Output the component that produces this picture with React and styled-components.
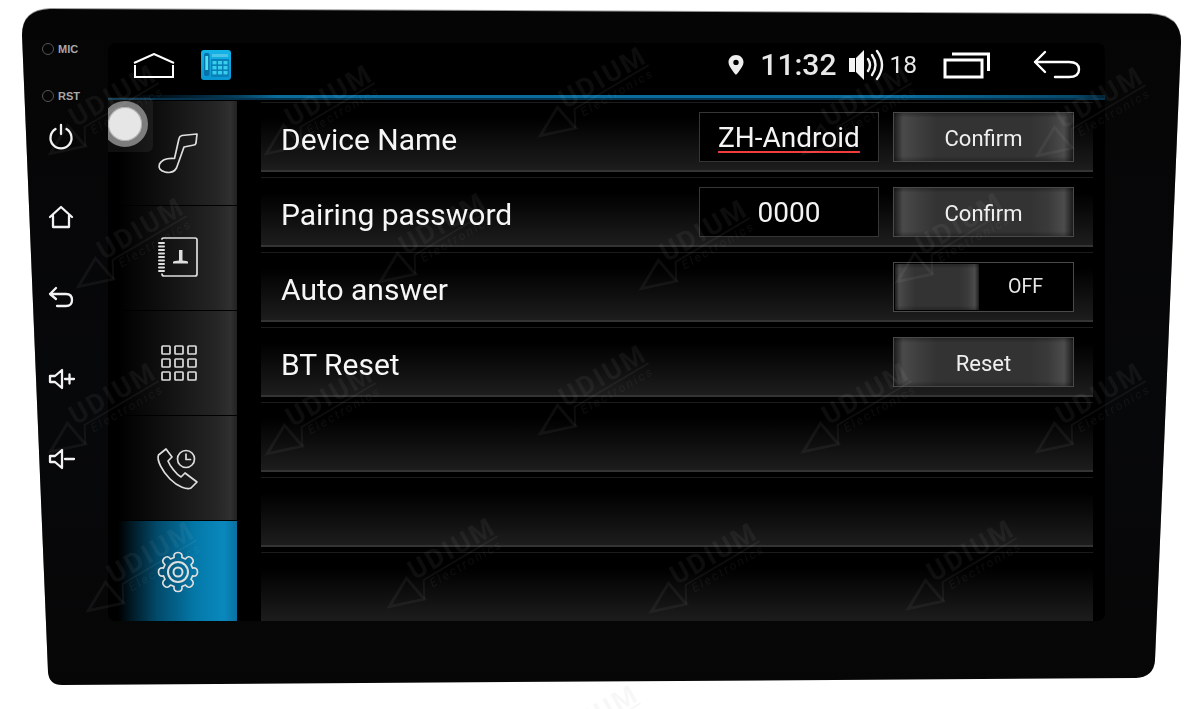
import React from 'react'
import styled, { createGlobalStyle } from 'styled-components'

const Global = createGlobalStyle`
html, body {
  margin: 0;
  padding: 0;
  background: #fff;
}
* {
  box-sizing: border-box;
}
`

const Page = styled.div`
position: relative;
width: 1200px;
height: 709px;
overflow: hidden;
background: #fff;
font-family: Roboto, "Liberation Sans", sans-serif;
`

const BezelEdge = styled.div`
filter: drop-shadow(0 -1px 0.5px #9a9a9a);
`

const Bezel = styled.div`
display: flex;
align-items: flex-start;
width: 1200px;
height: 709px;
background: linear-gradient(180deg, #050505 0%, #07080a 60%, #060606 100%);
clip-path: path('M50 9 L1150 14 Q1181 15 1181 42 L1155 660 Q1154 677 1136 678 L62 685 Q49 685 48 672 L22 35 Q22 10 50 9 Z');
`

const Rail = styled.div`
display: flex;
flex-direction: column;
align-items: flex-start;
flex: none;
width: 108px;
padding: 41px 0 0 42px;
`

const Led = styled.div`
display: flex;
align-items: center;
gap: 4px;
height: 16px;
margin-bottom: 31px;
color: #a8a8a8;
font: 700 11px "Liberation Sans", sans-serif;

&::before {
  content: '';
  width: 10px;
  height: 10px;
  border: 1px solid #555;
  border-radius: 50%;
}
`

const RailButtons = styled.div`
display: flex;
flex-direction: column;
gap: 56px;
margin-top: -10px;
`

const RailIcon = styled.svg`
display: block;
width: 38px;
height: 24px;
overflow: visible;
fill: none;
stroke: #f2f2f2;
stroke-width: 2.3;
stroke-linecap: round;
stroke-linejoin: round;
`

const Screen = styled.div`
position: relative;
flex: none;
width: 997px;
height: 578px;
margin-top: 43px;
background: #000;
border-radius: 8px;
overflow: hidden;
`

const StatusBar = styled.div`
display: flex;
align-items: center;
height: 52px;
padding: 0 24px 9px 25px;
`

const HomeGlyph = styled.svg`
width: 42px;
height: 26px;
margin-top: 2px;
fill: none;
stroke: #fff;
stroke-width: 2;
`

const PhoneApp = styled.svg`
width: 30px;
height: 30px;
margin: 0 0 0 26px;
`

const StatusRight = styled.div`
display: flex;
align-items: center;
margin-left: auto;
color: #e8e8e8;
`

const Pin = styled.svg`
width: 16px;
height: 20px;
fill: #eee;
margin: 0 16px 0 0;
`

const Clock = styled.span`
font-size: 30px;
font-weight: 500;
margin-right: 13px;
`

const Speaker = styled.svg`
width: 36px;
height: 32px;
`

const Volume = styled.span`
font-size: 24.5px;
margin: 0 26px 0 4px;
color: #e8e8e8;
`

const Recents = styled.svg`
width: 48px;
height: 28px;
fill: none;
stroke: #fff;
stroke-width: 3;
margin-right: 42px;
`

const BackGlyph = styled.svg`
width: 48px;
height: 30px;
fill: none;
stroke: #fff;
stroke-width: 2.4;
stroke-linecap: round;
stroke-linejoin: round;
`

const GlowLine = styled.div`
height: 5px;
background: linear-gradient(90deg, transparent 2%, #04263a 9%, #06405e 13%, #0b6c9c 17%, #0b6c9c 80%, #07496b 97%, #02202f 100%);
border-bottom: 2px solid #06334d;
`

const Body = styled.div`
display: flex;
align-items: flex-start;
padding-top: 2px;
`

const Sidebar = styled.div`
display: flex;
flex-direction: column;
gap: 1px;
flex: none;
width: 129px;
margin-top: -1px;
`

const Tab = styled.div`
display: flex;
align-items: center;
justify-content: center;
height: ${props => props.$last ? '101px' : '104px'};
padding-left: 11px;
background: ${props => props.$active
    ? 'linear-gradient(90deg, #000 8%, #024a6a 38%, #0479a9 68%, #0a88bd 90%, #0a70a0 100%)'
    : 'linear-gradient(90deg, #000 8%, #111 45%, #262626 85%, #303030 95%, #222 100%)'};
`

const TabIcon = styled.svg`
width: 42px;
height: 42px;
overflow: visible;
fill: none;
stroke: #dedede;
stroke-width: 1.7;
stroke-linecap: round;
stroke-linejoin: round;
`

const List = styled.div`
display: flex;
flex-direction: column;
gap: 5px;
flex: none;
width: 832px;
height: 519px;
margin-left: 24px;
`

const Row = styled.div`
display: flex;
align-items: center;
gap: 14px;
flex: ${props => props.$last ? '1' : 'none'};
height: 70px;
padding: 0 19px 0 20px;
background: linear-gradient(180deg, #000 0%, #000 22%, #1d1d1d 100%);
border-top: 1px solid #1c1c1c;
border-bottom: ${props => props.$last ? '0' : '2px solid #343434'};
`

const Label = styled.div`
flex: 1;
margin-top: 6px;
color: #f6f6f6;
font-size: 30px;
`

const Field = styled.div`
display: flex;
align-items: center;
justify-content: center;
width: 180px;
height: 50px;
padding-top: 2px;
background: #000;
border: 1px solid #363636;
color: #f4f4f4;
font-size: 28px;
`

const Misspelt = styled.span`
text-decoration: underline 2px #f03c3c;
text-decoration-skip-ink: none;
text-underline-offset: 4px;
`

const buttonFace = `
background:
  linear-gradient(180deg, rgba(0,0,0,0.28) 0%, rgba(0,0,0,0) 10%, rgba(0,0,0,0) 90%, rgba(0,0,0,0.25) 100%),
  linear-gradient(90deg, #1c1c1c 0%, #4a4a4a 5%, #3e3e3e 14%, #333 24%, #333 76%, #3a3a3a 86%, #4c4c4c 95%, #1c1c1c 100%);
`

const Button = styled.div`
display: flex;
align-items: center;
justify-content: center;
flex: none;
width: 181px;
height: 50px;
padding-top: 3px;
border: 1px solid #4a4a4a;
color: #f0f0f0;
font-size: 22px;
${buttonFace}
`

const Toggle = styled.div`
display: flex;
align-items: center;
flex: none;
width: 181px;
height: 50px;
padding: 1px;
background: #000;
border: 1px solid #4a4a4a;
color: #e8e8e8;
font-size: 19.5px;
`

const Thumb = styled.div`
flex: none;
width: 84px;
height: 100%;
${buttonFace}
`

const ToggleText = styled.span`
flex: 1;
text-align: center;
`

const BallShade = styled.div`
position: absolute;
left: 0;
top: 54px;
width: 45px;
height: 55px;
background: rgba(255, 255, 255, 0.06);
border-radius: 0 6px 6px 0;
`

const Ball = styled.div`
position: absolute;
left: -6px;
top: 58px;
width: 46px;
height: 46px;
border-radius: 50%;
background: #e6e6e6;
border: 6px solid #7d7d7d;
box-shadow: inset 0 0 0 1px #b4b4b4;
`

const Marks = styled.div`
position: absolute;
inset: 0;
pointer-events: none;
`

const MarkSvg = styled.svg`
position: absolute;
left: ${props => props.$x - 10}px;
top: ${props => props.$y - 50}px;
width: 150px;
height: 70px;
overflow: visible;
transform-origin: 10px 50px;
transform: rotate(-30deg);
color: ${props => props.$light ? 'rgba(0,0,0,0.03)' : 'rgba(255,255,255,0.05)'};
`

const Watermark = ({ x, y, light }) => (
  <MarkSvg $x={x} $y={y} $light={light} viewBox="0 0 150 70">
    <g fill="none" stroke="currentColor" strokeWidth="3" strokeLinejoin="miter">
      <path d="M11 49 L40 33 L45 60 Z" />
      <path d="M45 60 L54 43 L140 42" strokeWidth="2" />
    </g>
    <text x="46" y="39" textLength="94" fontFamily="Roboto, sans-serif" fontWeight="700" fontSize="27" fill="currentColor">UDIUM</text>
    <text x="58" y="54" textLength="80" fontFamily="Roboto, sans-serif" fontStyle="italic" fontSize="12" fill="currentColor">Electronics</text>
  </MarkSvg>
)

const markSpots = [
  [50, 155], [266, 155], [540, 137], [803, 155], [1037, 157],
  [78, 288], [380, 283], [641, 290], [897, 283],
  [50, 453], [267, 455], [540, 435], [803, 453], [1037, 453],
  [88, 612], [389, 608], [651, 613], [908, 610],
]

const gearPath = () => {
  const cx = 21
  const cy = 21
  const teeth = 8
  let d = ''
  for (let i = 0; i < teeth; i++) {
    const step = (Math.PI * 2) / teeth
    const a = i * step - Math.PI / 2
    const pt = (r, t) => `${(cx + r * Math.cos(t)).toFixed(2)} ${(cy + r * Math.sin(t)).toFixed(2)}`
    d += `${i === 0 ? 'M' : 'L'}${pt(15, a - step * 0.34)} `
    d += `Q${pt(20, a - step * 0.3)} ${pt(19.5, a)} `
    d += `Q${pt(20, a + step * 0.3)} ${pt(15, a + step * 0.34)} `
  }
  return d + 'Z'
}

const PhoneAppIcon = () => (
  <PhoneApp viewBox="0 0 30 30">
    <defs>
      <linearGradient id="tile" x1="0" y1="0" x2="0" y2="1">
        <stop offset="0" stopColor="#14b4e8" />
        <stop offset="1" stopColor="#0a96d2" />
      </linearGradient>
    </defs>
    <rect width="30" height="30" rx="3" fill="url(#tile)" />
    <rect x="3" y="3" width="5.5" height="23" rx="2" fill="#0672a8" />
    <rect x="4.3" y="6" width="2.8" height="14" fill="#4fe0f4" />
    <rect x="11" y="4" width="16" height="3" fill="#4cc4e6" />
    <rect x="10" y="9" width="18" height="18" rx="1" fill="#0880ba" />
    {[0, 1, 2].map(c => [0, 1, 2].map(r => (
      <rect key={`${c}${r}`} x={11.5 + c * 5.5} y={11 + r * 5} width="4" height="3.4" fill="#39cdec" />
    )))}
  </PhoneApp>
)

const Tabs = () => (
  <Sidebar>
    <Tab>
      <TabIcon viewBox="0 0 42 42">
        <path d="M40 2 L25 3.500 Q22.500 4 22 6.500 L17.500 26.500 Q6 25.500 2.500 32 Q0.500 38 8 40 Q16 42 19.500 36 L27 15 L37 13 Q38.500 13 39 11 Z" />
      </TabIcon>
    </Tab>
    <Tab>
      <TabIcon viewBox="0 0 42 42">
        <path d="M5 2 Q5 1 7 1 H38 Q40 1 40 3 V37 Q40 39 38 39 H7 Q5 39 5 37" />
        <path d="M2 6 H7 M2 9.500 H7 M2 13 H7 M2 16.500 H7 M2 20 H7 M2 23.500 H7 M2 27 H7 M2 30.500 H7 M2 34 H7" strokeWidth="2" />
        <path d="M22 13 H25.500 V23.500 H22 Z M16 25 Q17 23.500 22 23.500 H25.500 Q30.500 23.500 31 25 V26.500 H16 Z" fill="#dedede" stroke="none" />
      </TabIcon>
    </Tab>
    <Tab>
      <TabIcon viewBox="0 0 42 42" strokeWidth="2">
        {[0, 1, 2].map(c => [0, 1, 2].map(r => (
          <rect key={`${c}${r}`} x={5 + c * 13} y={4 + r * 13} width="8" height="8" rx="0.8" />
        )))}
      </TabIcon>
    </Tab>
    <Tab>
      <TabIcon viewBox="0 0 42 42">
        <path d="M9 2 L1.500 8 C-0.500 13 5 24 13 32 C21 40 30 43 34 41 L40 35 L28 26 L24 30 C19 27 13 19 11 14 L15 10 Z" />
        <circle cx="29" cy="12" r="8.500" />
        <path d="M29 7 V12.500 H33.500" />
      </TabIcon>
    </Tab>
    <Tab $active $last>
      <TabIcon viewBox="0 0 42 42">
        <path d={gearPath()} />
        <circle cx="21" cy="21" r="10" strokeWidth="2" />
        <circle cx="21" cy="21" r="4.500" strokeWidth="2" />
      </TabIcon>
    </Tab>
  </Sidebar>
)

const Settings = () => (
  <List>
    <Row>
      <Label>Device Name</Label>
      <Field><Misspelt>ZH-Android</Misspelt></Field>
      <Button>Confirm</Button>
    </Row>
    <Row>
      <Label>Pairing password</Label>
      <Field>0000</Field>
      <Button>Confirm</Button>
    </Row>
    <Row>
      <Label>Auto answer</Label>
      <Toggle><Thumb /><ToggleText>OFF</ToggleText></Toggle>
    </Row>
    <Row>
      <Label>BT Reset</Label>
      <Button>Reset</Button>
    </Row>
    <Row />
    <Row />
    <Row $last />
  </List>
)

const App = () => (
  <Page>
    <Global />
    <BezelEdge>
      <Bezel>
        <Rail>
          <Led>MIC</Led>
          <Led>RST</Led>
          <RailButtons>
            <RailIcon viewBox="0 0 38 24"><path d="M19 0 V9 M13.500 4 A10.500 10.500 0 1 0 24.500 4" /></RailIcon>
            <RailIcon viewBox="0 0 38 24"><path d="M8 12 L19 2 L30 12 M11 11 V22 H27 V11" /></RailIcon>
            <RailIcon viewBox="0 0 38 24"><path d="M14 3 L8 9 L14 14 M8 9 H24 Q30 9 30 15 Q30 21 24 21 H15" /></RailIcon>
            <RailIcon viewBox="0 0 38 24"><path d="M8 11 H13 L20 5 V23 L13 17 H8 Z M23 14 H32 M27.500 9.500 V18.500" /></RailIcon>
            <RailIcon viewBox="0 0 38 24"><path d="M8 11 H13 L20 5 V23 L13 17 H8 Z M23 14 H32" /></RailIcon>
          </RailButtons>
        </Rail>
        <Screen>
          <StatusBar>
            <HomeGlyph viewBox="0 0 42 26">
              <path d="M1 10 L21 1 L41 10" />
              <path d="M2 12 V24 H40 V12" />
            </HomeGlyph>
            <PhoneAppIcon />
            <StatusRight>
              <Pin viewBox="0 0 16 20">
                <path fillRule="evenodd" d="M8 0 C3.500 0 0.500 3.300 0.500 7.300 C0.500 12 8 20 8 20 C8 20 15.500 12 15.500 7.300 C15.500 3.300 12.500 0 8 0 Z M8 4.700 A2.700 2.700 0 1 1 8 10.100 A2.700 2.700 0 0 1 8 4.700 Z" />
              </Pin>
              <Clock>11:32</Clock>
              <Speaker viewBox="0 0 36 32">
                <path d="M0 9 H6 V23 H0 Z M7 9 L15 1 V31 L7 23 Z" fill="#f4f4f4" />
                <path d="M19 10 Q23 16 19 22 M23 6 Q30 16 23 26 M28 2 Q38 16 28 30" fill="none" stroke="#f4f4f4" strokeWidth="2.400" strokeLinecap="round" />
              </Speaker>
              <Volume>18</Volume>
              <Recents viewBox="0 0 48 28">
                <rect x="2" y="9" width="37" height="17" />
                <path d="M9 3 H45.500 V20" />
              </Recents>
              <BackGlyph viewBox="0 0 48 30">
                <path d="M12 2 L2 12 L12 22 M2 12 H36 Q46 12 46 19.500 Q46 27 36 27 H22" />
              </BackGlyph>
            </StatusRight>
          </StatusBar>
          <GlowLine />
          <Body>
            <Tabs />
            <Settings />
          </Body>
          <BallShade />
          <Ball />
        </Screen>
      </Bezel>
    </BezelEdge>
    <Marks>
      {markSpots.map(([x, y]) => <Watermark key={`${x}-${y}`} x={x} y={y} />)}
      <Watermark x={532} y={775} light />
    </Marks>
  </Page>
)

export default App
